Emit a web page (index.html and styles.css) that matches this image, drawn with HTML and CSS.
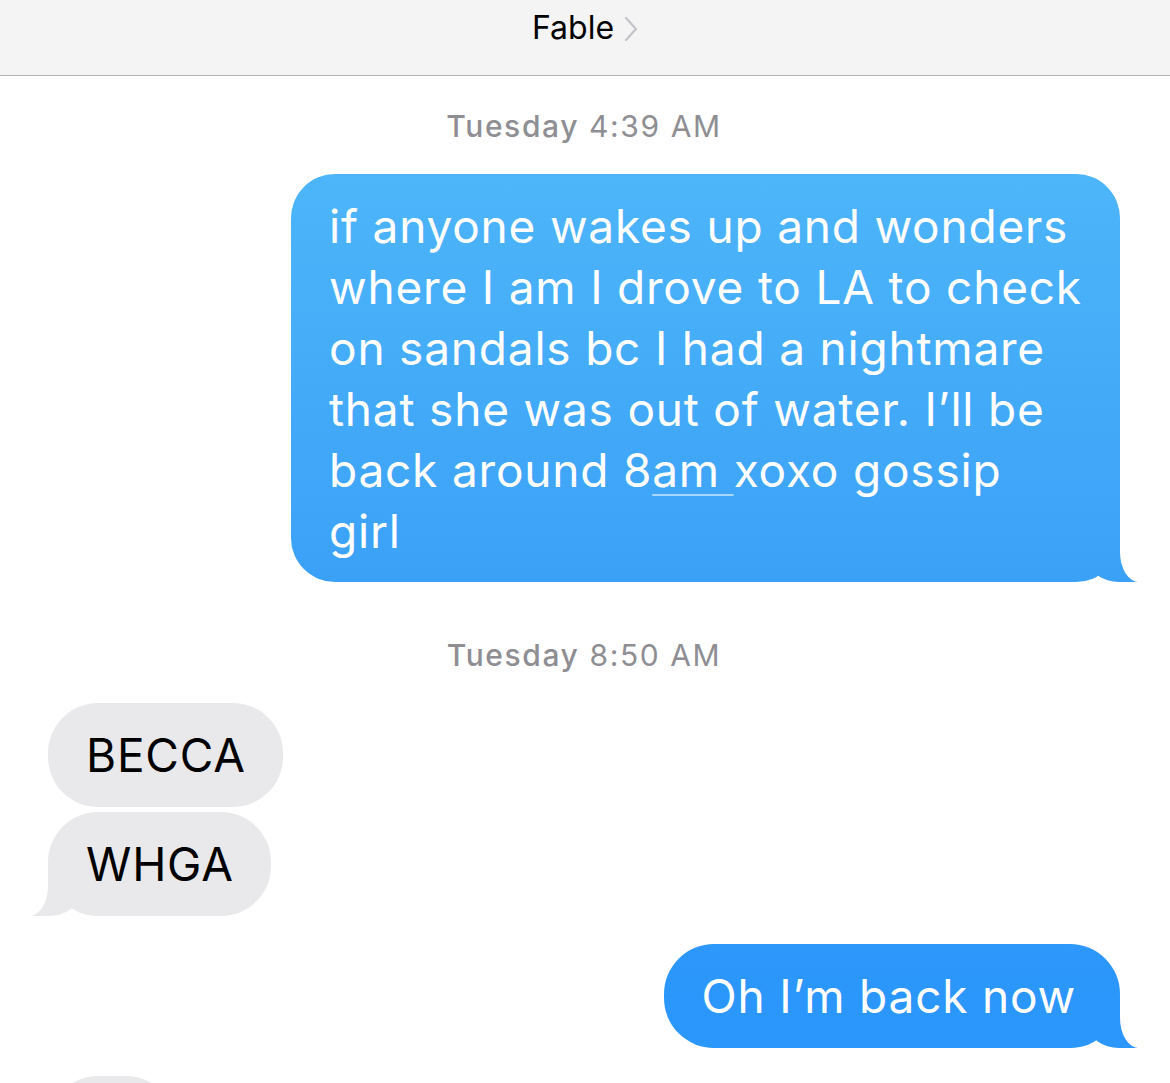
FILE: index.html
```html
<!DOCTYPE html>
<html lang="en">
<head>
    <meta charset="UTF-8">
    <meta name="viewport" content="width=device-width, initial-scale=1.0">
    <title>Fable</title>
    <link rel="stylesheet" href="styles.css">
</head>
<body>

<header class="nav">
    <span class="nav-title">Fable</span>
    <svg class="nav-chevron" width="14" height="26" viewBox="0 0 14 26">
        <path d="M2 2 L12 13 L2 24" fill="none" stroke="#c3c3c8" stroke-width="2.2" stroke-linecap="round" stroke-linejoin="round"/>
    </svg>
</header>

<main class="thread">
    <div class="stamp first"><b>Tuesday</b> 4:39 AM</div>
    <div class="bubble sent long tail">if anyone wakes up and wonders<br>where I am I drove to LA to check<br>on sandals bc I had a nightmare<br>that she was out of water. I’ll be<br>back around 8<span class="link">am </span>xoxo gossip<br>girl</div>

    <div class="stamp"><b>Tuesday</b> 8:50 AM</div>
    <div class="bubble received">BECCA</div>
    <div class="bubble received tail">WHGA</div>

    <div class="bubble sent tail later">Oh I’m back now</div>
    <div class="bubble received typing"></div>
</main>

</body>
</html>
```

FILE: styles.css
```css
* {
    box-sizing: border-box;
}
body {
    margin: 0;
    background: #fff;
    font-family: Inter, "Noto Sans", sans-serif;
}

/* top bar */
.nav {
    height: 76px;
    background: #f4f4f4;
    border-bottom: 1px solid #b4b4b4;
    display: flex;
    justify-content: center;
    align-items: flex-start;
    gap: 10px;
    padding-top: 9px;
}
.nav-title {
    font-size: 32px;
    line-height: 38px;
    color: #000;
}
.nav-chevron {
    margin-top: 7px;
}

/* messages */
.thread {
    height: 1007px;
    overflow: hidden;
    display: flex;
    flex-direction: column;
    padding: 0 50px 0 48px;
}
.stamp {
    align-self: center;
    font-size: 30px;
    line-height: 36px;
    letter-spacing: 1.6px;
    color: #8e8e93;
    margin: 55px 0 30px;
}
.stamp.first {
    margin-top: 32px;
}
.stamp b {
    font-weight: 500;
}

.bubble {
    position: relative;
    flex: none;
    font-size: 46px;
    line-height: 61px;
    letter-spacing: 0.8px;
    padding: 22px 37px 21px 38px;
    border-radius: 50px;
    white-space: nowrap;
}
.bubble + .bubble {
    margin-top: 5px;
}
.bubble.later,
.bubble.typing {
    margin-top: 28px;
}

/* sent bubbles share one screen-fixed gradient, lighter at the top */
.sent {
    align-self: flex-end;
    color: #fff;
    padding-right: 44px;
    background: linear-gradient(#55baf9 0, #4db5f9 174px, #3ba1f8 583px, #2b96fb 1000px) fixed;
}
.sent.long {
    width: 829px;
    padding-bottom: 20px;
    border-radius: 44px;
}
.received {
    align-self: flex-start;
    color: #000;
    background: #e9e9eb;
}
.typing {
    width: 128px;
    height: 104px;
}

.link {
    text-decoration: underline;
    text-decoration-color: rgba(255, 255, 255, 0.55);
    text-decoration-thickness: 2px;
    text-underline-offset: 7px;
}

/* bubble tails */
.tail::before,
.tail::after {
    content: "";
    position: absolute;
    bottom: 0;
    height: 54px;
}
.tail::before {
    background: inherit;
}
.tail::after {
    background: #fff;
}
.sent.tail::before {
    right: -17px;
    width: 48px;
    border-bottom-left-radius: 30px 22px;
}
.sent.tail::after {
    right: -60px;
    width: 60px;
    border-bottom-left-radius: 19px 30px;
}
.received.tail::before {
    left: -17px;
    width: 48px;
    border-bottom-right-radius: 30px 22px;
}
.received.tail::after {
    left: -60px;
    width: 60px;
    border-bottom-right-radius: 19px 30px;
}
```
